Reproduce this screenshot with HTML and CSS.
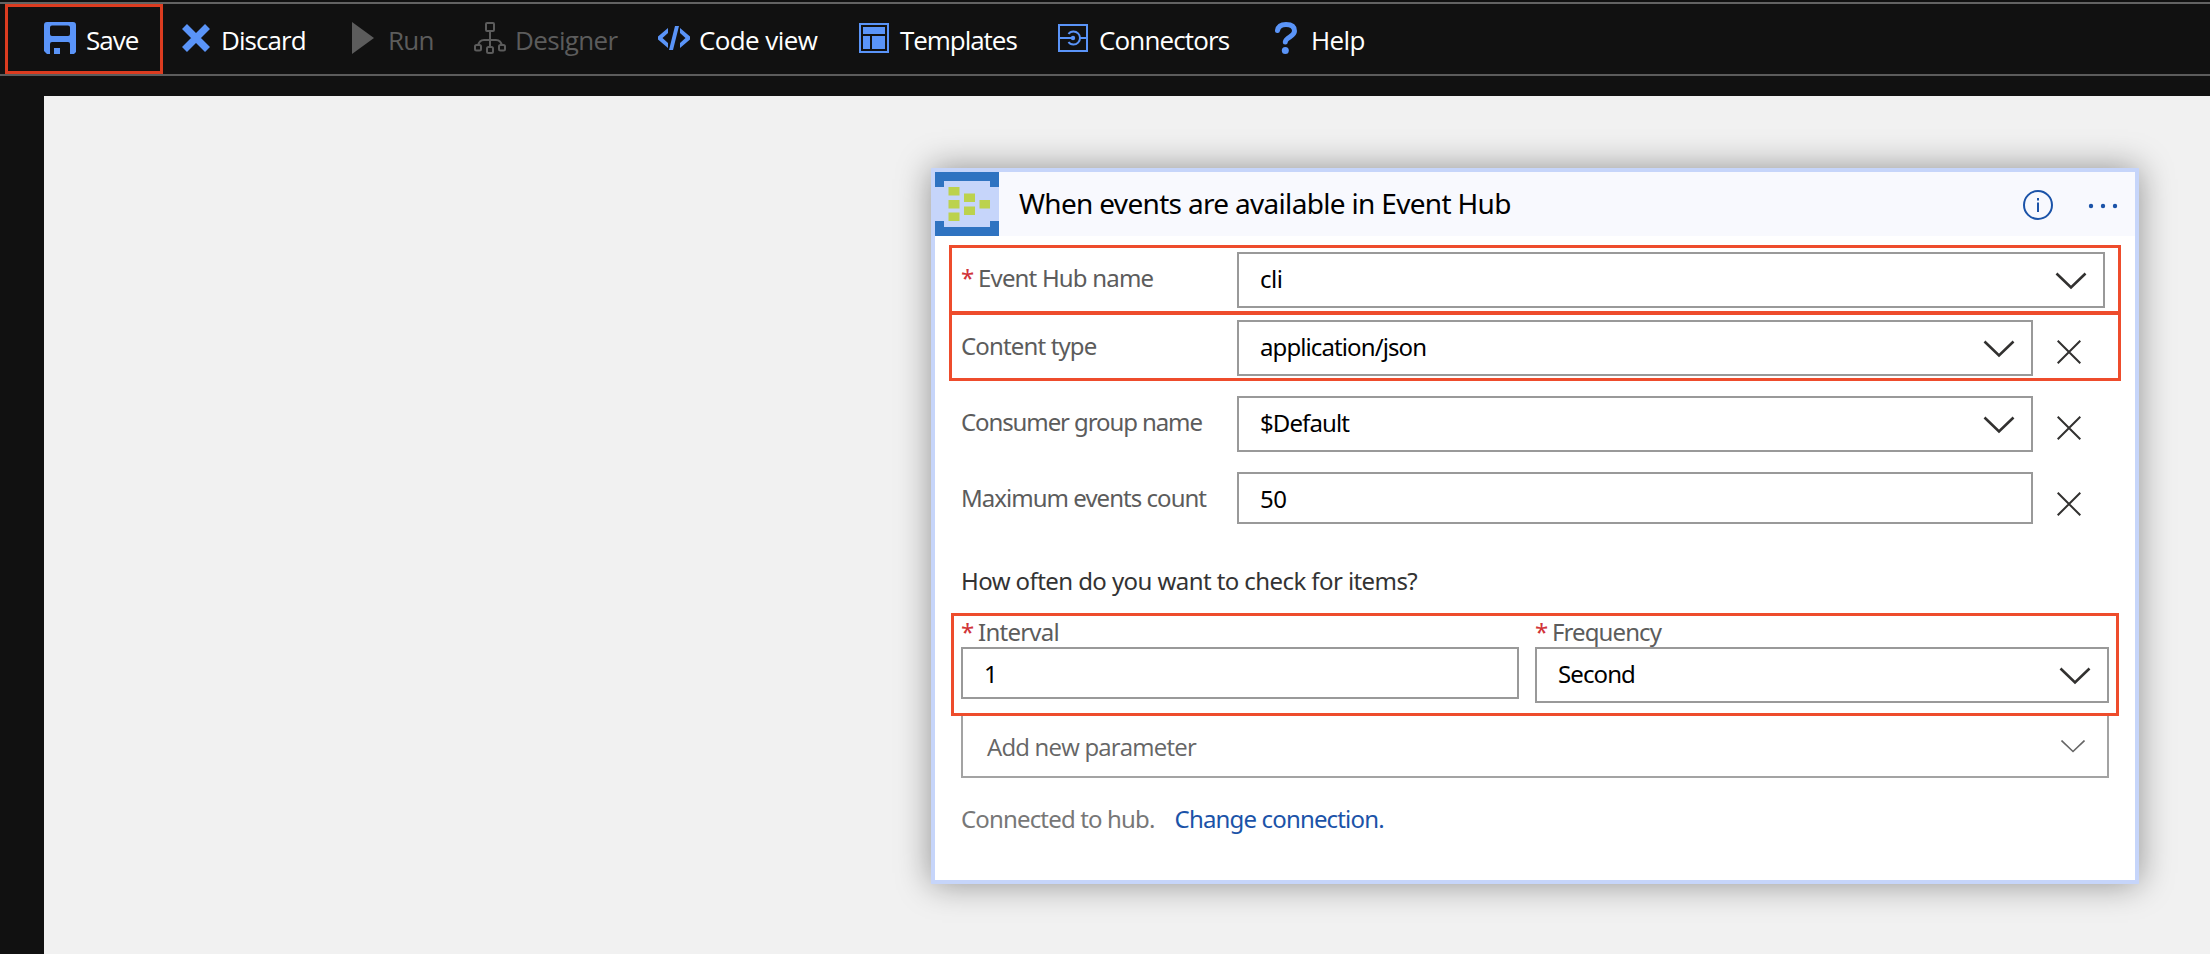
FILE: index.html
```html
<!DOCTYPE html>
<html lang="en">
<head>
<meta charset="utf-8">
<title>Logic app designer</title>
<link rel="stylesheet" href="styles.css">
</head>
<body>
<header class="toolbar">
  <button class="tool save"><svg width="32" height="32" viewBox="0 0 32 32"><path fill="#5a94f8" fill-rule="evenodd" d="M3 0H29Q32 0 32 3V30L30 32H26V22Q26 20 24 20H8Q6 20 6 22V32H3L0 29V3Q0 0 3 0ZM8 3.500Q6 3.500 6 5.500V12Q6 14 8 14H24Q26 14 26 12V5.500Q26 3.500 24 3.500ZM10 26H16V32H10Z"/></svg><span class="name">Save</span></button>
  <button class="tool discard"><svg width="28" height="28" viewBox="0 0 28 28"><path fill="none" stroke="#5a94f8" stroke-width="7" d="M2.500 2.500 25.500 25.500M25.500 2.500 2.500 25.500"/></svg><span class="name">Discard</span></button>
  <button class="tool run off"><svg width="22" height="32" viewBox="0 0 22 32"><path fill="#5c5c5c" d="M0 0 22 16 0 32Z"/></svg><span class="name">Run</span></button>
  <button class="tool designer off"><svg width="32" height="32" viewBox="0 0 32 32"><g fill="none" stroke="#5c5c5c" stroke-width="2"><rect x="12" y="1" width="8" height="8" rx="1"/><path d="M16 9V25M4 24Q5 18 10 18H22Q27 18 28 24"/><g fill="#111"><rect x="1" y="23" width="6" height="5.500" rx="1.500"/><rect x="13" y="25" width="6" height="6" rx="1.500"/><rect x="25" y="23" width="6" height="5.500" rx="1.500"/></g></g></svg><span class="name">Designer</span></button>
  <button class="tool code"><svg width="32" height="24" viewBox="0 0 32 24"><path fill="#5a94f8" d="M10 2V7L4.500 12 10 17V22L0 13.500V10.500ZM22 2 32 10.500V13.500L22 22V17L27.500 12 22 7ZM17 0H21L15 24H11Z"/></svg><span class="name">Code view</span></button>
  <button class="tool templates"><svg width="30" height="30" viewBox="0 0 30 30"><rect x="1" y="1" width="28" height="28" fill="none" stroke="#5a94f8" stroke-width="2"/><path fill="#5a94f8" d="M4 4H26V11H4ZM4 13H11V26H4ZM13 13H26V26H13Z"/></svg><span class="name">Templates</span></button>
  <button class="tool connectors"><svg width="30" height="28" viewBox="0 0 30 28"><g fill="none" stroke="#5a94f8" stroke-width="2"><rect x="1" y="1" width="28" height="26"/><path d="M1 14H14M22 14H29M10.500 10Q12 7.500 15.500 7.500A6.500 6.500 0 0 1 15.500 20.500Q12 20.500 10.500 18"/></g><circle cx="15" cy="14" r="2.200" fill="#5a94f8"/></svg><span class="name">Connectors</span></button>
  <button class="tool help"><svg width="22" height="32" viewBox="0 0 22 32"><path fill="none" stroke="#5a94f8" stroke-width="5" stroke-linecap="round" d="M2.500 8.500Q3.500 2.500 11 2.500Q19.500 2.500 19.500 9Q19.500 12 15 14.800Q10.500 17.500 10.300 20"/><circle cx="10.300" cy="28.500" r="3.500" fill="#5a94f8"/></svg><span class="name">Help</span></button>
</header>
<main class="canvas">
  <section class="card">
    <div class="head">
      <svg class="hub" width="64" height="64" viewBox="0 0 64 64"><rect width="64" height="64" fill="#c6d5fa"/><path fill="#2f73c1" d="M0 0H64V15H55V9H9V15H0ZM0 49H9V55H55V49H64V64H0Z"/><path fill="#bcd24d" d="M13.500 15H24.500V23.500H13.500ZM13.500 28H24.500V36.500H13.500ZM13.500 40.500H24.500V49H13.500ZM29 21.500H40V30H29ZM29 34.500H40V43H29ZM44.500 28H55V36.500H44.500Z"/></svg>
      <h1>When events are available in Event Hub</h1>
      <svg class="info" width="30" height="30" viewBox="0 0 30 30"><circle cx="15" cy="15" r="14" fill="none" stroke="#1b53a8" stroke-width="2"/><path fill="#1b53a8" d="M14 8H16V10.500H14ZM14 12.500H16V22H14Z"/></svg>
      <svg class="dots" width="30" height="6" viewBox="0 0 30 6"><g fill="#1b53a8"><circle cx="3" cy="3" r="2.200"/><circle cx="15" cy="3" r="2.200"/><circle cx="27" cy="3" r="2.200"/></g></svg>
    </div>
    <div class="row marked first">
      <label><i class="star">*</i><span class="w-hub">Event Hub name</span></label>
      <div class="box wide"><span class="w-cli">cli</span><svg class="chev" width="32" height="18" viewBox="0 0 32 18"><path d="M1.500 1.500 16 15.500 30.500 1.500"/></svg></div>
    </div>
    <div class="row marked second">
      <label><span class="w-type">Content type</span></label>
      <div class="box"><span class="w-json">application/json</span><svg class="chev" width="32" height="18" viewBox="0 0 32 18"><path d="M1.500 1.500 16 15.500 30.500 1.500"/></svg></div>
      <svg class="cross" width="24" height="24" viewBox="0 0 24 24"><path d="M.7.700 23.300 23.300M23.300.7.700 23.300"/></svg>
    </div>
    <div class="row third">
      <label><span class="w-group">Consumer group name</span></label>
      <div class="box"><span class="w-def">$Default</span><svg class="chev" width="32" height="18" viewBox="0 0 32 18"><path d="M1.500 1.500 16 15.500 30.500 1.500"/></svg></div>
      <svg class="cross" width="24" height="24" viewBox="0 0 24 24"><path d="M.7.700 23.300 23.300M23.300.7.700 23.300"/></svg>
    </div>
    <div class="row fourth">
      <label><span class="w-max">Maximum events count</span></label>
      <div class="box short"><span class="w-50">50</span></div>
      <svg class="cross" width="24" height="24" viewBox="0 0 24 24"><path d="M.7.700 23.300 23.300M23.300.7.700 23.300"/></svg>
    </div>
    <p class="question"><span class="w-q">How often do you want to check for items?</span></p>
    <div class="schedule">
      <div class="field interval">
        <label><i class="star">*</i><span class="w-int">Interval</span></label>
        <div class="box short"><span>1</span></div>
      </div>
      <div class="field frequency">
        <label><i class="star">*</i><span class="w-freq">Frequency</span></label>
        <div class="box"><span class="w-sec">Second</span><svg class="chev" width="32" height="18" viewBox="0 0 32 18"><path d="M1.500 1.500 16 15.500 30.500 1.500"/></svg></div>
      </div>
    </div>
    <div class="add"><span class="w-add">Add new parameter</span><svg width="24" height="13" viewBox="0 0 24 13"><path d="M.5.500 12 11.500 23.500.5"/></svg></div>
    <p class="foot"><span class="w-conn">Connected to hub.</span><a class="w-chg">Change connection.</a></p>
  </section>
</main>
</body>
</html>
```
FILE: styles.css
```css
* { box-sizing: border-box; }
body { margin: 0; width: 2210px; height: 954px; overflow: hidden; background: #111; padding-top: 2px; font-family: "Noto Sans", sans-serif; }
svg { display: block; flex: none; }
.toolbar { height: 74px; border-top: 2px solid #636363; border-bottom: 2px solid #5c5c5c; display: flex; padding-left: 5px; }
.tool { appearance: none; background: none; border: 0; margin: 0; padding: 0; color: #fff; font: 26px/36px "Open Sans", sans-serif; display: flex; align-items: flex-start; height: 70px; white-space: nowrap; text-align: left; }
.tool .name { margin-top: 18px; }
.tool svg { margin-top: 18px; }
.tool.off { color: #5c5c5c; }
.save { width: 158px; border: 3px solid #dc3c20; padding-left: 36px; gap: 10px; letter-spacing: -1px; }
.save svg { margin-top: 15px; }
.save .name { margin-top: 15px; }
.discard { width: 189px; padding-left: 19px; gap: 11px; letter-spacing: -.95px; }
.discard svg { margin-top: 20px; }
.run { width: 122px; gap: 14px; letter-spacing: -.8px; }
.designer { width: 184px; gap: 9px; letter-spacing: -.65px; }
.code { width: 201px; gap: 9px; letter-spacing: -.6px; }
.code svg { margin-top: 22px; }
.templates { width: 199px; gap: 11px; letter-spacing: -1.05px; }
.templates svg { margin-top: 19px; }
.connectors { width: 217px; gap: 11px; letter-spacing: -.85px; }
.connectors svg { margin-top: 20px; }
.help { gap: 14px; letter-spacing: -.6px; }
.canvas { margin: 20px 0 0 44px; height: 858px; background: #f1f1f1; padding: 72px 0 0 887px; }
.card { width: 1208px; height: 716px; background: #fff; border: 4px solid #c6d5fa; box-shadow: 0 0 32px rgba(0,0,0,.4); }
.head { height: 64px; background: #f8f9fe; display: flex; align-items: center; }
h1 { margin: -2px 0 0 20px; flex: 1; font-weight: 400; font-size: 28px; line-height: 38px; color: #000; white-space: nowrap; letter-spacing: -.68px; }
.info { margin: 2px 35px 0 0; }
.dots { margin: 4px 17px 0 0; }
.row { margin-left: 14px; width: 1172px; display: flex; padding-left: 12px; }
.row label { width: 276px; }
label, .box, .question, .foot { font-size: 24px; line-height: 34px; white-space: nowrap; }
label { color: #5c5c5c; display: flex; }
.star { font-style: normal; color: #d13438; width: 17px; }
.marked { border: 3px solid #ee4c2c; padding-left: 9px; }
.box { width: 796px; height: 56px; border: 2px solid #999; color: #000; padding: 8px 16px 0 21px; display: flex; justify-content: space-between; }
.box.wide { width: 868px; }
.box.short { height: 52px; }
.chev { margin-top: 10px; fill: none; stroke: #323130; stroke-width: 2.6; }
.cross { margin: 20px 0 0 24px; fill: none; stroke: #323130; stroke-width: 2; }
.first { margin-top: 9px; height: 69px; padding-top: 4px; }
.second { margin-top: -2px; height: 69px; padding-top: 5px; }
.row label { padding-top: 9px; }
.third { margin-top: 15px; }
.fourth { margin-top: 20px; }
.question { margin: 39px 0 0 26px; color: #333; height: 50px; padding-top: 1px; }
.schedule { position: relative; margin-left: 16px; width: 1168px; height: 103px; border: 3px solid #ee4c2c; display: flex; gap: 16px; padding-left: 7px; }
.field label { height: 31px; line-height: 32px; }
.interval .box { width: 558px; padding-left: 21px; }
.frequency .box { width: 574px; }
.add { margin: -2px 0 0 26px; width: 1148px; height: 64px; border: 2px solid #a3a3a3; border-top: 0; color: #666; font: 24px/34px "Open Sans", sans-serif; display: flex; justify-content: space-between; padding: 16px 22px 0 24px; white-space: nowrap; }
.add svg { margin-top: 10px; fill: none; stroke: #666; stroke-width: 1.6; }
.foot { margin: 24px 0 0 26px; color: #777; display: flex; gap: 20px; }
.foot a { color: #1b53a8; }

/* tracking */
.w-hub { letter-spacing: -.82px; }
.w-type { letter-spacing: -.85px; }
.w-group { letter-spacing: -1.1px; }
.w-max { letter-spacing: -.97px; }
.w-cli, .w-50 { letter-spacing: -.5px; }
.w-json, .w-def { letter-spacing: -.9px; }
.w-q { letter-spacing: -.58px; }
.w-int { letter-spacing: -.75px; }
.w-freq, .w-sec { letter-spacing: -.9px; }
.w-add { letter-spacing: -.8px; }
.w-conn { letter-spacing: -.84px; }
.w-chg { letter-spacing: -.84px; }
```
